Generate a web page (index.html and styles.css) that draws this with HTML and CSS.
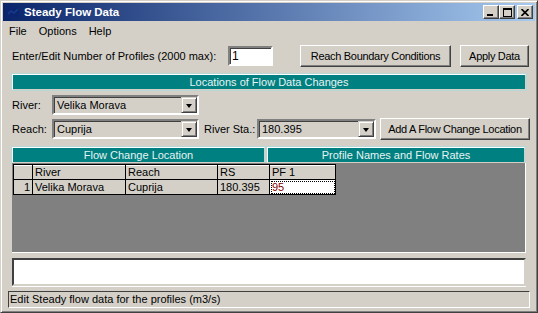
FILE: index.html
```html
<!DOCTYPE html>
<html lang="en">

<head>
    <meta charset="UTF-8">
    <title>Steady Flow Data</title>
    <link rel="stylesheet" href="styles.css">
</head>

<body>
    <div class="window">
        <div class="titlebar">
            <svg class="app-icon" width="16" height="16" viewBox="0 0 16 16">
                <rect x="2" y="3" width="12" height="10" fill="#0c2570" />
                <path d="M3 10 L6 7 L9 9 L13 5" stroke="#1b3a8a" stroke-width="1.5" fill="none" />
            </svg>
            <span class="title">Steady Flow Data</span>
            <div class="title-buttons">
                <span class="tbtn"><svg width="8" height="7" viewBox="0 0 8 7"><rect x="0" y="5" width="6" height="2" fill="#000" /></svg></span>
                <span class="tbtn"><svg width="9" height="9" viewBox="0 0 9 9"><rect x="0.5" y="0.5" width="8" height="8" fill="none" stroke="#000" /><rect x="0" y="0" width="9" height="2" fill="#000" /></svg></span>
                <span class="tbtn close"><svg width="8" height="7" viewBox="0 0 8 7"><path d="M0.5 0 L7.5 7 M7.5 0 L0.5 7" stroke="#000" stroke-width="1.6" /></svg></span>
            </div>
        </div>

        <div class="menubar">
            <span>File</span>
            <span>Options</span>
            <span>Help</span>
        </div>

        <div class="content">
            <div class="row profiles-row">
                <label>Enter/Edit Number of Profiles (2000 max):</label>
                <input class="field num" type="text" value="1">
                <button class="btn reach-btn">Reach Boundary Conditions</button>
                <button class="btn apply-btn">Apply Data</button>
            </div>

            <div class="band">Locations of Flow Data Changes</div>

            <div class="row river-row">
                <label class="lbl">River:</label>
                <div class="combo river-combo"><span>Velika Morava</span><span class="arrow"></span></div>
            </div>

            <div class="row reach-row">
                <label class="lbl">Reach:</label>
                <div class="combo river-combo"><span>Cuprija</span><span class="arrow"></span></div>
                <label class="sta-lbl">River Sta.:</label>
                <div class="combo sta-combo"><span>180.395</span><span class="arrow"></span></div>
                <button class="btn add-btn">Add A Flow Change Location</button>
            </div>

            <div class="band-pair">
                <div class="band left-band">Flow Change Location</div>
                <div class="band right-band">Profile Names and Flow Rates</div>
            </div>

            <div class="grid">
                <table>
                    <tr>
                        <td class="c-num"></td>
                        <td class="c-river">River</td>
                        <td class="c-reach">Reach</td>
                        <td class="c-rs">RS</td>
                        <td class="c-pf">PF 1</td>
                    </tr>
                    <tr>
                        <td class="c-num">1</td>
                        <td>Velika Morava</td>
                        <td>Cuprija</td>
                        <td>180.395</td>
                        <td class="edit">95</td>
                    </tr>
                </table>
            </div>

            <div class="note"></div>
        </div>

        <div class="statusbar">Edit Steady flow data for the profiles (m3/s)</div>
    </div>
</body>

</html>
```

FILE: styles.css
```css
body {
    margin: 0;
    background: #d4d0c8;
    font-family: "Liberation Sans", Arial, sans-serif;
    font-size: 11px;
    color: #000;
}

.window {
    width: 538px;
    height: 313px;
    box-sizing: border-box;
    border: 1px solid;
    border-color: #d4d0c8 #404040 #404040 #d4d0c8;
    box-shadow: inset 1px 1px 0 #fff, inset -1px -1px 0 #808080;
    padding: 2px;
    display: flex;
    flex-direction: column;
    white-space: nowrap;
}

.titlebar {
    height: 18px;
    display: flex;
    align-items: center;
    padding: 0 2px;
    background: linear-gradient(to right, #0a246a, #a6caf0);
}

.app-icon {
    margin-right: 3px;
}

.title {
    color: #fff;
    font-weight: bold;
    font-size: 11.5px;
}

.title-buttons {
    margin-left: auto;
    display: flex;
}

.tbtn {
    width: 16px;
    height: 14px;
    box-sizing: border-box;
    background: #d4d0c8;
    border: 1px solid;
    border-color: #fff #404040 #404040 #fff;
    box-shadow: inset -1px -1px 0 #808080;
    display: flex;
    align-items: center;
    justify-content: center;
}

.tbtn.close {
    margin-left: 2px;
}

.menubar {
    height: 19px;
    display: flex;
    align-items: center;
    padding-left: 0;
    font-size: 11px;
}

.menubar span {
    padding: 0 6px;
}

.content {
    padding: 0 5px 0 9px;
    display: flex;
    flex-direction: column;
}

.row {
    display: flex;
    align-items: center;
}

.profiles-row {
    margin-top: 4px;
    height: 23px;
}

.profiles-row label {
    width: 216px;
}

.field {
    box-sizing: border-box;
    height: 20px;
    border: 2px solid;
    border-color: #808080 #fff #fff #808080;
    box-shadow: inset 1px 1px 0 #404040;
    background: #fff;
    font: inherit;
    font-size: 12px;
    padding: 0 2px;
}

.num {
    width: 45px;
}

.btn {
    box-sizing: border-box;
    height: 22px;
    flex-shrink: 0;
    background: #d4d0c8;
    border: 1px solid;
    border-color: #fff #404040 #404040 #fff;
    box-shadow: inset -1px -1px 0 #808080;
    font: inherit;
    font-size: 11px;
    letter-spacing: -0.3px;
    padding: 0;
    white-space: nowrap;
}

.reach-btn {
    width: 151px;
    margin-left: 27px;
}

.apply-btn {
    width: 69px;
    margin-left: 9px;
}

.band {
    box-sizing: border-box;
    height: 16px;
    background: #008080;
    color: #e8f4f4;
    font-size: 11px;
    text-align: center;
    line-height: 14px;
    border: 1px solid;
    border-color: #fff #d4d0c8 #d4d0c8 #fff;
    box-shadow: 0 0 0 1px #b8d8d8;
}

.content > .band {
    margin-top: 7px;
    width: 514px;
}

.river-row {
    margin-top: 5px;
    height: 20px;
}

.reach-row {
    margin-top: 3px;
    height: 22px;
}

.lbl {
    width: 40px;
}

.combo {
    box-sizing: border-box;
    height: 20px;
    flex-shrink: 0;
    border: 2px solid;
    border-color: #808080 #fff #fff #808080;
    box-shadow: inset 1px 1px 0 #404040;
    display: flex;
    align-items: center;
    padding-left: 3px;
}

.combo span:first-child {
    flex: 1;
}

.arrow {
    width: 16px;
    height: 16px;
    box-sizing: border-box;
    background: #d4d0c8;
    border: 1px solid;
    border-color: #d4d0c8 #404040 #404040 #d4d0c8;
    box-shadow: inset 1px 1px 0 #fff, inset -1px -1px 0 #808080;
    position: relative;
}

.arrow::after {
    content: "";
    position: absolute;
    left: 4px;
    top: 6px;
    border-left: 3.5px solid transparent;
    border-right: 3.5px solid transparent;
    border-top: 4px solid #000;
}

.river-combo {
    width: 147px;
}

.sta-lbl {
    margin-left: 5px;
    width: 53px;
}

.sta-combo {
    width: 119px;
}

.add-btn {
    width: 150px;
    margin-left: 4px;
}

.band-pair {
    display: flex;
    gap: 2px;
    margin-top: 7px;
}

.left-band {
    width: 253px;
}

.right-band {
    width: 258px;
}

.grid {
    box-sizing: border-box;
    height: 90px;
    width: 514px;
    background: #808080;
    border-right: 1px solid #fff;
    border-bottom: 1px solid #fff;
    padding: 1px 0 0 1px;
}

table {
    border-collapse: collapse;
    font-size: 11px;
}

td {
    height: 14px;
    padding: 0 2px;
    border: 1px solid #000;
    background: #d4d0c8;
    white-space: nowrap;
    line-height: 14px;
}

tr:first-child td {
    box-shadow: inset 0 1px 0 #fff;
}

.c-num {
    width: 14px;
    text-align: right;
}

.c-river {
    width: 88px;
}

.c-reach {
    width: 87px;
}

.c-rs {
    width: 47px;
}

.c-pf {
    width: 61px;
}

td.edit {
    background: #fff;
    color: #800000;
    outline: 1px dotted #000;
    outline-offset: -2px;
}

.note {
    margin-top: 5px;
    height: 28px;
    width: 514px;
    box-sizing: border-box;
    background: #fff;
    border: 2px solid;
    border-color: #404040 #d4d0c8 #d4d0c8 #404040;
    box-shadow: 0 1px 0 #fff;
}

.statusbar {
    margin: 5px 5px 0 5px;
    height: 17px;
    box-sizing: border-box;
    border: 1px solid;
    border-color: #404040 #fff #fff #404040;
    font-size: 11px;
    line-height: 15px;
    padding-left: 1px;
}
```
